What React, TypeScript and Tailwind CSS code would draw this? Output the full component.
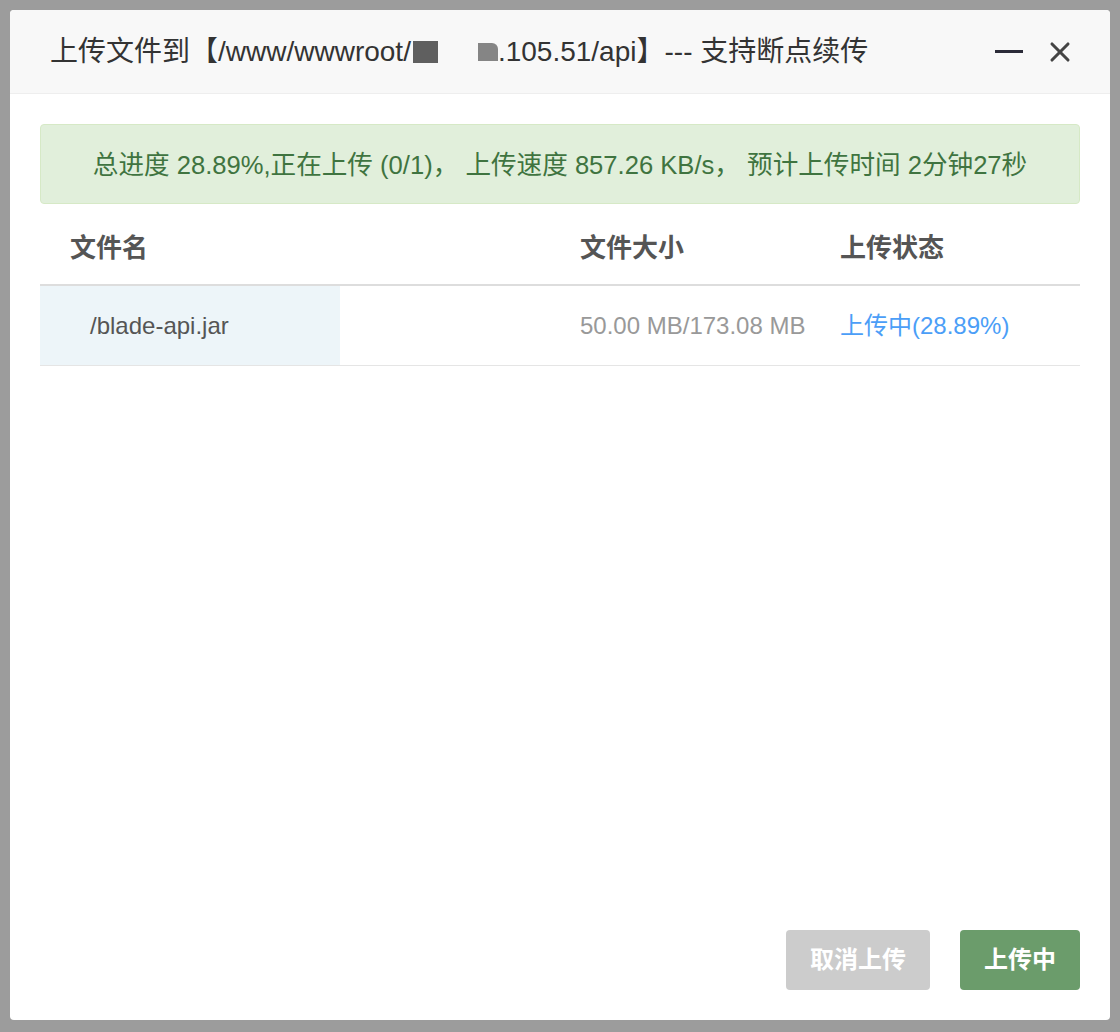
import { X } from "lucide-react";

const font = "font-['Liberation_Sans','Noto_Sans_CJK_SC',sans-serif]";

export default function App() {
  return (
    <div className={`${font} min-h-[1032px] w-[1120px] bg-[#9c9c9c] p-[10px]`}>
      <div className="flex h-[1010px] w-[1100px] flex-col overflow-hidden rounded-[4px] bg-white">
        {/* title bar */}
        <div className="flex h-[84px] shrink-0 items-center border-b border-[#eeeeee] bg-[#f8f8f8] pl-[40px] pr-[34px]">
          <div className="flex flex-1 items-center whitespace-nowrap text-[28px] text-[#333]">
            <span>上传文件到【/www/wwwroot/</span>
            <span className="ml-[2px] inline-block h-[22px] w-[25px] bg-[#5f5f5f]" />
            <span className="ml-[40px] inline-block h-[18px] w-[20px] rounded-tr-[6px] bg-[#858585]" />
            <span>.105.51/api】--- 支持断点续传</span>
          </div>
          <div className="flex items-center gap-[21px]">
            <span className="inline-block h-[3px] w-[28px] bg-[#2b2b38]" />
            <X className="h-[32px] w-[32px] text-[#444]" strokeWidth={2.3} />
          </div>
        </div>

        <div className="flex flex-1 flex-col px-[30px] pt-[30px] pb-[30px]">
          {/* progress */}
          <div className="flex h-[80px] items-center justify-center rounded-[4px] border border-[#d6e9c6] bg-[#e1efdb] pt-[2px] text-[25.6px] text-[#3f7440]">
            总进度 28.89%,正在上传 (0/1)， 上传速度 857.26 KB/s， 预计上传时间 2分钟27秒
          </div>

          {/* file table */}
          <div className="grid h-[82px] grid-cols-[540px_260px_1fr] items-center border-b-2 border-[#dddddd] pt-[8px] text-[26px] font-bold text-[#555]">
            <div className="pl-[30px]">文件名</div>
            <div>文件大小</div>
            <div>上传状态</div>
          </div>
          <div className="grid h-[80px] grid-cols-[300px_240px_260px_1fr] items-center border-b border-[#e5e5e5] text-[24px]">
            <div className="flex h-full items-center bg-[#edf5f9] pl-[50px] text-[#555]">/blade-api.jar</div>
            <div />
            <div className="text-[#999]">50.00 MB/173.08 MB</div>
            <div className="text-[#4b9ef7]">上传中(28.89%)</div>
          </div>

          <div className="flex-1" />

          <div className="flex justify-end gap-[30px]">
            <button
              type="button"
              className="h-[60px] w-[144px] rounded-[4px] bg-[#cccccc] text-[24px] font-bold text-white"
            >
              取消上传
            </button>
            <button
              type="button"
              className="h-[60px] w-[120px] rounded-[4px] bg-[#6b9c6b] text-[24px] font-bold text-white"
            >
              上传中
            </button>
          </div>
        </div>
      </div>
    </div>
  );
}
